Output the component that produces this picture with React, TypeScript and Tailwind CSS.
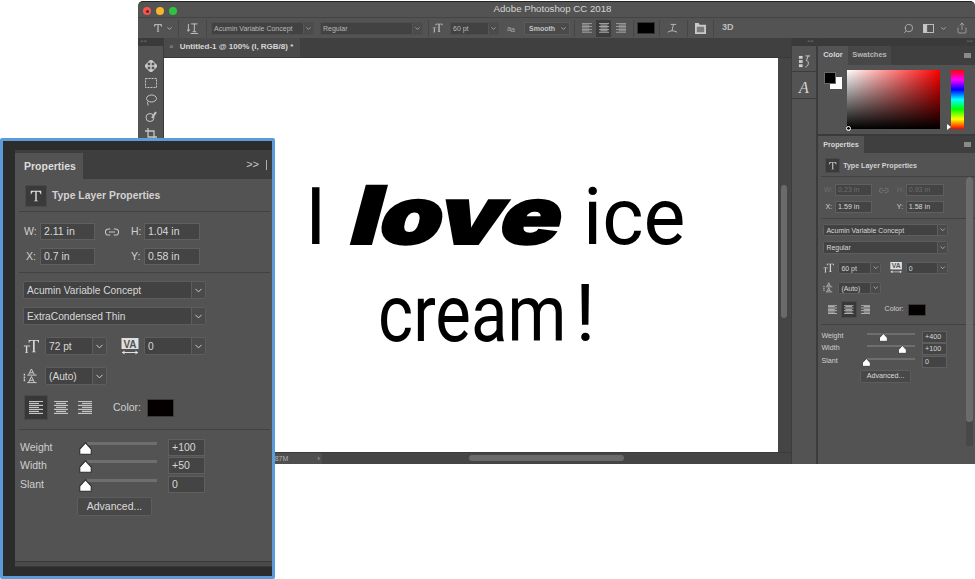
import React from "react";
import { ChevronDown, Search, Share } from "lucide-react";

const sans = "font-['Liberation_Sans','Arimo',sans-serif]";

function TIcon({ className = "" }: { className?: string }) {
  return (
    <svg viewBox="0 0 16 16" className={className} fill="currentColor">
      <path d="M2 2h12v4h-.8c-.3-1.700-.9-3-2.600-3H8.800v9.600c0 .7.4.9 1.600.9v.5H5.600v-.5c1.200 0 1.600-.2 1.600-.9V3H5.400C3.700 3 3.100 4.300 2.800 6H2z" />
    </svg>
  );
}

function SizeIcon({ className = "" }: { className?: string }) {
  return (
    <svg viewBox="0 0 18 16" className={className} fill="currentColor">
      <path d="M6 1h11v3h-.6c-.2-1.200-.7-2.200-2-2.200H12.400v11c0 .6.3.7 1.300.8v.4H9.300v-.4c1-.1 1.300-.2 1.300-.8V1.800H8.600c-1.300 0-1.800 1-2 2.200H6z" />
      <path d="M1 7h6v1.600h-.5c-.1-.5-.4-.9-1-.9h-1V14c0 .3.200.4.700.4v.4H2.300v-.4c.5 0 .7-.1.700-.4V7.700H2c-.6 0-.9.400-1 .9H.8z" />
    </svg>
  );
}

function LeadingIcon({ className = "" }: { className?: string }) {
  return (
    <svg viewBox="0 0 16 18" className={className} fill="none" stroke="currentColor" strokeWidth="1">
      <path d="M6 7l3-6 3 6M7.200 5h3.600M4.500 7.500h10M6 15l3-6 3 6M7.200 13h3.600M4.500 15.500h10" />
      <path d="M1.500 6v8" strokeWidth="1.500" strokeDasharray="2 1" />
    </svg>
  );
}

function TrackingIcon({ className = "" }: { className?: string }) {
  return (
    <svg viewBox="0 0 18 17" className={className}>
      <rect x="0.500" y="0" width="17" height="11" fill="currentColor" />
      <text x="9" y="9.500" textAnchor="middle" fontSize="10" fontWeight="700" fill="#535353" fontFamily="Liberation Sans">VA</text>
      <path d="M1 14.500h16" stroke="currentColor" strokeWidth="1" />
      <path d="M1 14.500l2.500-2v4zM17 14.500l-2.500-2v4z" fill="currentColor" />
    </svg>
  );
}

function LinkIcon({ className = "" }: { className?: string }) {
  return (
    <svg viewBox="0 0 16 10" className={className} fill="none" stroke="currentColor" strokeWidth="1.200">
      <path d="M6 1.500H4a3.500 3.500 0 000 7h2M10 1.500h2a3.500 3.500 0 010 7h-2M4.500 5h7" />
    </svg>
  );
}

function AlignIcon({ kind, className = "" }: { kind: "left" | "center" | "right"; className?: string }) {
  const rows = [14, 10, 14, 10, 14, 10, 14];
  return (
    <svg viewBox="0 0 14 13" className={className} fill="currentColor">
      {rows.map((w, i) => (
        <rect
          key={i}
          x={kind === "left" ? 0 : kind === "right" ? 14 - w : (14 - w) / 2}
          y={i * 2 - 0.2}
          width={w}
          height="1.200"
        />
      ))}
    </svg>
  );
}

function Thumb({ pos }: { pos: number }) {
  return (
    <svg
      viewBox="0 0 12 12"
      className="absolute top-[3px] w-[13px] h-[13px] -ml-[8px]"
      style={{ left: `${pos}%` }}
    >
      <path d="M6 .8L11.300 6.500V11.300H.7V6.500z" fill="#ffffff" stroke="#2c2c2c" strokeWidth="1" />
    </svg>
  );
}

function Field({ value, className = "", dim = false }: { value: string; className?: string; dim?: boolean }) {
  return (
    <div
      className={`h-[17px] bg-[#444444] border border-[#5f5f5f] pl-[3px] leading-[15px] text-[10.500px] ${dim ? "text-[#6e6e6e]" : "text-[#d8d8d8]"} ${className}`}
    >
      {value}
    </div>
  );
}

function Select({ value, className = "" }: { value: string; className?: string }) {
  return (
    <div className={`h-[18px] flex bg-[#424242] border border-[#5d5d5d] rounded-[2px] text-[10.200px] leading-[17px] text-[#d8d8d8] ${className}`}>
      <div className="flex-1 pl-[3px] whitespace-nowrap overflow-hidden">{value}</div>
      <div className="w-[14px] border-l border-[#5d5d5d] flex items-center justify-center bg-[#4a4a4a]">
        <ChevronDown size={11} strokeWidth={2} />
      </div>
    </div>
  );
}

function SliderRow({ label, value, pos, mt }: { label: string; value: string; pos: number; mt: string }) {
  return (
    <div className={`flex ${mt} h-[17px] text-[10.500px] text-[#cfcfcf]`}>
      <div className="w-[67px] leading-[16px]">{label}</div>
      <div className="w-[81px] relative">
        <div className="absolute left-[0px] w-[70px] top-[3px] h-[3px] bg-[#6e6e6e]" />
        <Thumb pos={(pos * 70) / 81} />
      </div>
      <Field value={value} className="w-[37px]" />
    </div>
  );
}

type BodyProps = {
  w: string; h: string; x: string; y: string; dimSize?: boolean;
  style: string; size: string; align: "left" | "center";
  weight: string; width: string; wp: number; widthP: number;
};

function PropertiesBody(p: BodyProps) {
  const alignClass = "text-[#c4c4c4]";
  return (
    <div className={`${sans} w-[257px] text-[#d0d0d0]`}>
      <div className="flex items-center h-[22px] mt-[6px] ml-[10px]">
        <div className="w-[22px] h-[22px] bg-[#3a3a3a] border border-[#4a4a4a] flex items-center justify-center text-[#e0e0e0]">
          <TIcon className="w-[14px] h-[14px]" />
        </div>
        <div className="ml-[5px] text-[10.400px] font-bold text-[#d2d2d2]">Type Layer Properties</div>
      </div>
      <div className="mt-[4px] ml-[4px] mr-[2px] h-px bg-[#424242]" />
      <div className="ml-[9px] mt-[11px] flex h-[17px] items-center text-[10.500px]">
        <span className={`w-[16px] ${p.dimSize ? "text-[#6e6e6e]" : ""}`}>W:</span>
        <Field value={p.w} className="w-[55px]" dim={p.dimSize} />
        <LinkIcon className={`w-[14px] h-[10px] ml-[10px] ${p.dimSize ? "text-[#808080]" : "text-[#c8c8c8]"}`} />
        <span className={`ml-[12px] w-[13px] ${p.dimSize ? "text-[#6e6e6e]" : ""}`}>H:</span>
        <Field value={p.h} className="w-[56px]" dim={p.dimSize} />
      </div>
      <div className="ml-[9px] mt-[8px] flex h-[17px] items-center text-[10.500px]">
        <span className="w-[16px] pl-[2px]">X:</span>
        <Field value={p.x} className="w-[55px]" />
        <span className="ml-[36px] w-[13px]">Y:</span>
        <Field value={p.y} className="w-[56px]" />
      </div>
      <div className="mt-[7px] ml-[4px] mr-[2px] h-px bg-[#424242]" />
      <Select value="Acumin Variable Concept" className="ml-[8px] mt-[8px] w-[183px]" />
      <Select value={p.style} className="ml-[8px] mt-[8px] w-[183px]" />
      <div className="ml-[8px] mt-[12px] flex items-center h-[18px]">
        <SizeIcon className="w-[17px] h-[15px] text-[#d8d8d8]" />
        <Select value={p.size} className="ml-[5px] w-[62px]" />
        <TrackingIcon className="ml-[14px] w-[18px] h-[17px] text-[#e0e0e0]" />
        <Select value="0" className="ml-[5px] w-[62px]" />
      </div>
      <div className="ml-[8px] mt-[12px] flex items-center h-[18px]">
        <LeadingIcon className="w-[15px] h-[17px] text-[#d0d0d0]" />
        <Select value="(Auto)" className="ml-[7px] w-[62px]" />
      </div>
      <div className="ml-[9px] mt-[10px] flex items-center h-[25px]">
        <div className={`w-[24px] h-[25px] flex items-center justify-center ${p.align === "left" ? "bg-[#383838] border border-[#4a4a4a]" : ""}`}>
          <AlignIcon kind="left" className={`w-[14px] h-[13px] ${alignClass}`} />
        </div>
        <div className={`ml-[1px] w-[24px] h-[25px] flex items-center justify-center ${p.align === "center" ? "bg-[#383838] border border-[#4a4a4a]" : ""}`}>
          <AlignIcon kind="center" className={`w-[14px] h-[13px] ${alignClass}`} />
        </div>
        <div className="w-[24px] h-[25px] flex items-center justify-center">
          <AlignIcon kind="right" className={`w-[14px] h-[13px] ${alignClass}`} />
        </div>
        <span className="ml-[16px] text-[10.500px] text-[#cfcfcf]">Color:</span>
        <div className="ml-[6px] w-[27px] h-[18px] bg-[#050000] border border-[#3a3a3a]" />
      </div>
      <div className="mt-[9px] ml-[4px] mr-[2px] h-px bg-[#424242]" />
      <div className="ml-[5px]">
        <SliderRow label="Weight" value={p.weight} pos={p.wp} mt="mt-[9px]" />
        <SliderRow label="Width" value={p.width} pos={p.widthP} mt="mt-[1px]" />
        <SliderRow label="Slant" value="0" pos={0} mt="mt-[2px]" />
      </div>
      <div className="ml-[62px] mt-[4px] w-[75px] h-[19px] bg-[#484848] border border-[#5d5d5d] rounded-[2px] text-center text-[#dcdcdc] text-[10.500px] leading-[17px]">
        Advanced...
      </div>
    </div>
  );
}

function Sep({ className = "" }: { className?: string }) {
  return <div className={`w-px h-[17px] bg-[#464646] shrink-0 ${className}`} />;
}

function Dots({ text, className = "" }: { text: string; className?: string }) {
  return <div className={`h-[8px] bg-[#3a3a3a] text-[#8f8f8f] text-[6px] leading-[7px] px-[2px] ${className}`}>{text}</div>;
}

function OptSelect({ text, className }: { text: string; className: string }) {
  return (
    <div className={`h-[13px] flex bg-[#424242] border border-[#4e4e4e] text-[7px] leading-[11px] text-[#b8b8b8] shrink-0 ${className}`}>
      <div className="flex-1 pl-[2px] whitespace-nowrap overflow-hidden">{text}</div>
      <div className="w-[10px] border-l border-[#555] bg-[#4b4b4b] flex items-center justify-center"><ChevronDown size={7} strokeWidth={2.500} /></div>
    </div>
  );
}

function OptionsBar() {
  return (
    <div className={`${sans} h-[21px] bg-[#535353] flex items-center border-t border-[#444] pl-[15px] text-[#c8c8c8] shrink-0`}>
      <TIcon className="w-[10px] h-[10px] text-[#d4d4d4] shrink-0" />
      <ChevronDown size={7} strokeWidth={2.500} className="ml-[3px] shrink-0" />
      <Sep className="ml-[5px]" />
      <svg viewBox="0 0 12 12" className="ml-[8px] w-[11px] h-[11px] text-[#c8c8c8] shrink-0" fill="none" stroke="currentColor">
        <path d="M1.500 1v8M0 7l1.500 2L3 7M4.500 1h7M8 1v8M6 9.500h4M4 11.500h8" />
      </svg>
      <Sep className="ml-[8px]" />
      <OptSelect text="Acumin Variable Concept" className="ml-[4px] w-[103px]" />
      <OptSelect text="Regular" className="ml-[6px] w-[103px]" />
      <Sep className="ml-[5px]" />
      <SizeIcon className="ml-[3px] w-[11px] h-[10px] text-[#d4d4d4] shrink-0" />
      <OptSelect text="60 pt" className="ml-[7px] w-[49px]" />
      <span className="ml-[8px] w-[9px] text-[7.500px] leading-[7px] text-[#a8a8a8] tracking-[-0.5px]">a<span className="relative top-[1px]">a</span></span>
      <div className="ml-[8px] w-[46px] h-[13px] bg-[#4a4a4a] border border-[#5a5a5a] text-[7px] leading-[11px] pl-[4px] font-bold text-[#c4c4c4] flex justify-between pr-[2px] shrink-0">
        Smooth <ChevronDown size={7} strokeWidth={2.500} className="mt-[2px]" />
      </div>
      <Sep className="ml-[4px]" />
      <AlignIcon kind="left" className="ml-[7px] w-[10px] h-[10px] text-[#a8a8a8] shrink-0" />
      <div className="ml-[4px] w-[15px] h-[17px] bg-[#3c3c3c] flex items-center justify-center shrink-0"><AlignIcon kind="center" className="w-[10px] h-[10px] text-[#b8b8b8]" /></div>
      <AlignIcon kind="right" className="ml-[5px] w-[10px] h-[10px] text-[#a8a8a8] shrink-0" />
      <Sep className="ml-[7px]" />
      <div className="ml-[3px] w-[18px] h-[12px] bg-black border border-[#333] shrink-0" />
      <Sep className="ml-[4px]" />
      <svg viewBox="0 0 12 12" className="ml-[7px] w-[11px] h-[11px] text-[#c0c0c0] shrink-0" fill="none" stroke="currentColor"><path d="M4 1.500h6M7 1.500L5.500 8.500M1 10c3-2 6-2 10 0" /></svg>
      <Sep className="ml-[9px]" />
      <svg viewBox="0 0 12 12" className="ml-[7px] w-[11px] h-[11px] text-[#c8c8c8] shrink-0" fill="currentColor"><path d="M0 0h4l1 2h7v10H0z" /><path d="M2 4h8v6H2z" fill="#7a7a7a" /></svg>
      <Sep className="ml-[7px]" />
      <span className="ml-[8px] text-[9px] font-bold text-[#bdbdbd]">3D</span>
      <div className="ml-auto flex items-center text-[#c8c8c8]">
        <Search size={11} strokeWidth={1.500} className="-scale-x-100" />
        <svg viewBox="0 0 12 10" className="ml-[9px] w-[11px] h-[9px]" fill="none" stroke="currentColor"><rect x=".5" y=".5" width="11" height="9" /><rect x="1" y="1" width="3" height="8" fill="currentColor" /></svg>
        <ChevronDown size={7} strokeWidth={2.500} className="ml-[6px]" />
        <Share size={12} strokeWidth={1.200} className="ml-[9px] mr-[7px]" />
      </div>
    </div>
  );
}

function ToolIcons() {
  return (
    <div className="flex flex-col items-center gap-[5px] pt-[14px] text-[#c6c6c6]">
      <svg viewBox="0 0 12 12" className="w-[12px] h-[12px]" fill="none" stroke="currentColor" strokeWidth="1.500"><path d="M6 0v12M0 6h12" /><path d="M6 0l-2 2h4zM6 12l-2-2h4zM0 6l2-2v4zM12 6l-2-2v4z" fill="currentColor" /></svg>
      <svg viewBox="0 0 12 12" className="w-[12px] h-[12px]" fill="none" stroke="currentColor" strokeDasharray="2 1"><rect x=".5" y="1.500" width="11" height="9" /></svg>
      <svg viewBox="0 0 12 12" className="w-[12px] h-[12px]" fill="none" stroke="currentColor"><ellipse cx="6.500" cy="4.500" rx="5" ry="3.500" /><path d="M3 7.500c-1 1 0 2 0 4" /></svg>
      <svg viewBox="0 0 12 12" className="w-[12px] h-[12px]" fill="none" stroke="currentColor"><circle cx="5" cy="6.500" r="4" /><path d="M7 7l4-6" strokeWidth="2" /></svg>
      <svg viewBox="0 0 12 12" className="w-[12px] h-[12px]" fill="none" stroke="currentColor" strokeWidth="1.300"><path d="M3 0v9h9M0 3h9v9" /></svg>
    </div>
  );
}

function ColorPanel() {
  return (
    <div className="h-[88px] bg-[#535353] flex flex-col">
      <div className={`${sans} h-[19px] flex bg-[#3f3f3f] text-[7.500px] leading-[18px] shrink-0`}>
        <div className="w-[30px] bg-[#535353] text-center font-bold text-[#d8d8d8]">Color</div>
        <div className="w-[43px] bg-[#474747] text-center text-[#b5b5b5] font-bold">Swatches</div>
        <div className="ml-auto mr-[4px] mt-[7px] w-[7px] h-[5px] bg-[#8a8a8a]" />
      </div>
      <div className="flex pt-[5px] pl-[6px]">
        <div className="relative w-[23px] h-[21px]">
          <div className="absolute left-[6px] top-[7px] w-[12px] h-[12px] bg-white" />
          <div className="absolute left-0 top-[2px] w-[12px] h-[12px] bg-black border border-[#6b6b6b]" />
        </div>
        <div className="relative ml-[0px] w-[93px] h-[59px] bg-[linear-gradient(to_top,#000,transparent),linear-gradient(to_right,#fff,#f00)]">
          <div className="absolute -left-[1px] -bottom-[2px] w-[5px] h-[5px] rounded-full border border-white" />
        </div>
        <div className="relative ml-[11px] w-[13px] h-[59px] bg-[linear-gradient(to_bottom,#f00,#f0f,#00f,#0ff,#0f0,#ff0,#f00)]">
          <div className="absolute -left-[4px] bottom-[-1px] w-0 h-0 border-y-[3px] border-y-transparent border-l-[4px] border-l-white" />
        </div>
      </div>
    </div>
  );
}

function RightProperties() {
  return (
    <div className="relative mt-[2px] flex-1 bg-[#535353] overflow-hidden">
      <div className={`${sans} h-[17px] flex bg-[#3f3f3f] text-[7.200px] leading-[17px]`}>
        <div className="w-[46px] bg-[#535353] text-center font-bold text-[#d8d8d8]">Properties</div>
        <div className="ml-auto mr-[4px] mt-[6px] w-[7px] h-[5px] bg-[#8a8a8a]" />
      </div>
      <div className="[zoom:0.68] pt-[2px]">
        <PropertiesBody
          w="0.23 in" h="0.93 in" x="1.59 in" y="1.58 in" dimSize
          style="Regular" size="60 pt" align="center"
          weight="+400" width="+100" wp={36} widthP={76}
        />
      </div>
      <div className="absolute right-[2px] top-[41px] w-[7px] h-[269px] bg-[#484848]">
        <div className="w-[7px] h-[245px] rounded-full bg-[#6c6c6c]" />
      </div>
    </div>
  );
}

function Workspace() {
  return (
    <div className="relative flex-1 flex min-h-0">
      <div className="w-[26px] bg-[#535353] border-r border-[#3c3c3c] shrink-0">
        <Dots text=">>" />
        <ToolIcons />
      </div>
      <div className="w-[627px] flex flex-col shrink-0 bg-[#454545]">
        <div className={`${sans} h-[20px] bg-[#404040] shrink-0 border-b border-[#383838]`}>
          <div className="w-[136px] h-[19px] bg-[#4a4a4a] text-[8px] leading-[18px] font-bold text-[#d8d8d8] whitespace-nowrap pl-[5px]">
            <span className="text-[#9a9a9a] font-normal mr-[6px]">×</span>Untitled-1 @ 100% (I, RGB/8) *
          </div>
        </div>
        <div className="flex-1 flex min-h-0">
          <div className="w-[614px] bg-white text-black overflow-hidden shrink-0">
            <div className="ml-[141px] mt-[107px] flex items-baseline h-[100px] leading-[99px] font-['Roboto',sans-serif] font-normal text-[79px] whitespace-nowrap">
              <span className="w-[36px] inline-block">I</span>
              <span className="w-[242px] inline-block font-['Inter',sans-serif] font-black text-[80px] origin-bottom-left [transform:skewX(-15deg)_scaleX(1.255)] tracking-[-1px] [-webkit-text-stroke:2px_black]">love</span>
              <span>ice</span>
            </div>
            <div className="ml-[214px] flex h-[99px] leading-[99px] font-['Roboto',sans-serif] font-normal text-[79px] whitespace-nowrap">
              <span className="w-[197px] inline-block origin-left scale-x-[0.85]">cream</span>
              <span>!</span>
            </div>
          </div>
          <div className="flex-1 relative">
            <div className="absolute left-[3px] top-[127px] w-[6px] h-[133px] rounded-full bg-[#6a6a6a]" />
          </div>
        </div>
        <div className={`${sans} h-[12px] flex shrink-0 bg-[#454545] border-t border-[#3a3a3a]`}>
          <div className="w-[158px] bg-[#4f4f4f] text-[7px] leading-[11px] text-[#b5b5b5] flex justify-end items-center pr-[2px]">
            <span className="mr-[29px]">87M</span><span className="text-[8px]">›</span>
          </div>
          <div className="ml-[147px] mt-[2px] w-[155px] h-[6px] rounded-full bg-[#6a6a6a]" />
        </div>
      </div>
      <div className="w-[26px] shrink-0 bg-[#4a4a4a] border-x border-[#3c3c3c]">
        <Dots text="<<" className="text-right" />
        <div className="h-[26px] pt-[5px] bg-[#535353] border-b border-[#3c3c3c] flex items-center justify-center text-[#cfcfcf]">
          <svg viewBox="0 0 14 14" className="w-[13px] h-[13px]" fill="currentColor"><rect x="1" y="1" width="4" height="3" /><rect x="1" y="5.500" width="4" height="3" /><rect x="1" y="10" width="4" height="3" /><path d="M8 1h5M11 1l-2 5c3 0 3 6-1 7" fill="none" stroke="currentColor" /></svg>
        </div>
        <div className="h-[27px] pt-[5px] bg-[#535353] border-b border-[#3c3c3c] flex items-center justify-center font-['Liberation_Serif',serif] italic text-[16px] text-[#d4d4d4]">A</div>
        <div className="h-full bg-[#535353]" />
      </div>
      <div className="flex-1 flex flex-col min-w-0 bg-[#3a3a3a] pl-px">
        <Dots text=">>" className="text-right" />
        <ColorPanel />
        <RightProperties />
      </div>
    </div>
  );
}

function PSWindow() {
  return (
    <div className="ml-[138px] mt-px h-[463px] flex flex-col bg-[#535353] rounded-t-[5px] overflow-hidden border-t border-[#222]">
      <div className={`${sans} relative h-[15px] flex items-center justify-center shrink-0 text-[9.700px] text-[#d4d4d4]`}>
        <span className="ml-[-8px]">Adobe Photoshop CC 2018</span>
        <div className="absolute left-[5px] top-[5px] flex gap-[5px]">
          <div className="w-[8px] h-[8px] rounded-full bg-[#f5574f] flex items-center justify-center"><div className="w-[3px] h-[3px] rounded-full bg-[#7a1a14]" /></div>
          <div className="w-[8px] h-[8px] rounded-full bg-[#f6b42c]" />
          <div className="w-[8px] h-[8px] rounded-full bg-[#2dc241]" />
        </div>
      </div>
      <OptionsBar />
      <Workspace />
    </div>
  );
}

function FloatingPanel() {
  return (
    <div className="absolute left-0 top-[138px] w-[275px] h-[441px] border-[3px] border-[#5b9bd9] bg-[#2c2c2c] flex flex-col rounded-[2px] pl-[12px] pt-[9px]">
      <div className="h-[29px] bg-[#3e3e3e] flex shrink-0">
        <div className={`${sans} mt-[3px] w-[68px] bg-[#535353] pl-[9px] text-[10.500px] font-bold text-[#dcdcdc] leading-[26px]`}>Properties</div>
        <div className={`${sans} ml-auto pr-[5px] flex items-center text-[#c8c8c8] text-[11px]`}>
          <span className="mr-[7px]">&gt;&gt;</span>
          <div className="w-px h-[10px] bg-[#b0b0b0]" />
        </div>
      </div>
      <div className="flex-1 bg-[#535353] overflow-hidden">
        <PropertiesBody
          w="2.11 in" h="1.04 in" x="0.7 in" y="0.58 in"
          style="ExtraCondensed Thin" size="72 pt" align="left"
          weight="+100" width="+50" wp={0} widthP={0}
        />
      </div>
      <div className="h-[6px] bg-[#4a4a4a] border-y border-[#3a3a3a] shrink-0" />
      <div className="h-[9px] shrink-0" />
    </div>
  );
}

export default function App() {
  return (
    <div className="relative w-[975px] h-[579px] bg-white overflow-hidden">
      <PSWindow />
      <FloatingPanel />
    </div>
  );
}
